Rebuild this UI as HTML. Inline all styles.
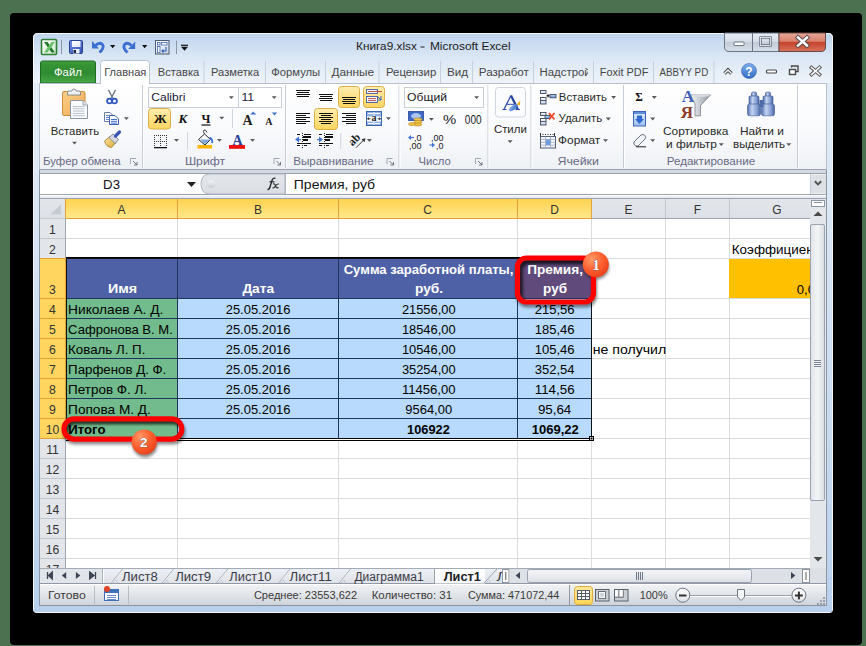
<!DOCTYPE html><html><head><meta charset="utf-8"><style>html,body{margin:0;padding:0;width:866px;height:646px;overflow:hidden;background:#4b7151;font-family:"Liberation Sans",sans-serif}svg{display:block}</style></head><body><svg width="866" height="646" viewBox="0 0 866 646" font-family="Liberation Sans, sans-serif"><defs><linearGradient id="gFrame" x1="0" y1="0" x2="0" y2="1"><stop offset="0" stop-color="#cfdff2"/><stop offset="0.05" stop-color="#d2e1f3"/><stop offset="0.09" stop-color="#e9f0f8"/><stop offset="1" stop-color="#bcd3ec"/></linearGradient><linearGradient id="gTitle" x1="0" y1="0" x2="0" y2="1"><stop offset="0" stop-color="#c0d5ee"/><stop offset="0.45" stop-color="#d9e6f4"/><stop offset="1" stop-color="#eff4fa"/></linearGradient><linearGradient id="gSide" x1="0" y1="0" x2="0" y2="1"><stop offset="0" stop-color="#e4edf7"/><stop offset="1" stop-color="#b9d1ec"/></linearGradient><linearGradient id="gXl" x1="0" y1="0" x2="1" y2="1"><stop offset="0" stop-color="#ffffff"/><stop offset="1" stop-color="#cfe8cf"/></linearGradient><linearGradient id="gSave" x1="0" y1="0" x2="1" y2="1"><stop offset="0" stop-color="#6f8fe0"/><stop offset="1" stop-color="#3350b0"/></linearGradient><linearGradient id="gLbl" x1="0" y1="0" x2="1" y2="1"><stop offset="0" stop-color="#ffffff"/><stop offset="1" stop-color="#dfe6f2"/></linearGradient><linearGradient id="gForm" x1="0" y1="0" x2="1" y2="1"><stop offset="0" stop-color="#ffffff"/><stop offset="1" stop-color="#c9d3e3"/></linearGradient><linearGradient id="gBtn" x1="0" y1="0" x2="0" y2="1"><stop offset="0" stop-color="#e9eef5"/><stop offset="0.45" stop-color="#d7dee8"/><stop offset="0.5" stop-color="#c3ccd8"/><stop offset="1" stop-color="#d5dde8"/></linearGradient><linearGradient id="gClose" x1="0" y1="0" x2="0" y2="1"><stop offset="0" stop-color="#e8a799"/><stop offset="0.45" stop-color="#d9826f"/><stop offset="0.5" stop-color="#c7432b"/><stop offset="1" stop-color="#d6735e"/></linearGradient><linearGradient id="gFile" x1="0" y1="0" x2="0" y2="1"><stop offset="0" stop-color="#45a040"/><stop offset="0.15" stop-color="#369434"/><stop offset="0.55" stop-color="#2e8a30"/><stop offset="1" stop-color="#4aa846"/></linearGradient><linearGradient id="gHelp" x1="0" y1="0" x2="0" y2="1"><stop offset="0" stop-color="#7fb0ec"/><stop offset="1" stop-color="#2f6cc4"/></linearGradient><linearGradient id="gRib" x1="0" y1="0" x2="0" y2="1"><stop offset="0" stop-color="#ffffff"/><stop offset="0.55" stop-color="#f9fafc"/><stop offset="1" stop-color="#eef1f5"/></linearGradient><linearGradient id="gClip" x1="0" y1="0" x2="1" y2="1"><stop offset="0" stop-color="#fbd08a"/><stop offset="1" stop-color="#efa94f"/></linearGradient><linearGradient id="gBrush" x1="0" y1="0" x2="1" y2="1"><stop offset="0" stop-color="#fbe7a2"/><stop offset="1" stop-color="#d9a836"/></linearGradient><linearGradient id="gHi" x1="0" y1="0" x2="0" y2="1"><stop offset="0" stop-color="#ffeeb0"/><stop offset="1" stop-color="#ffd560"/></linearGradient><linearGradient id="gSBr" x1="0" y1="0" x2="1" y2="1"><stop offset="0" stop-color="#9cc3f5"/><stop offset="1" stop-color="#2d5cc0"/></linearGradient><linearGradient id="gCell" x1="0" y1="0" x2="0" y2="1"><stop offset="0" stop-color="#ffffff"/><stop offset="1" stop-color="#c7d3e6"/></linearGradient><linearGradient id="gCellB" x1="0" y1="0" x2="0" y2="1"><stop offset="0" stop-color="#c8dcf8"/><stop offset="1" stop-color="#5f8fd8"/></linearGradient><linearGradient id="gFill" x1="0" y1="0" x2="0" y2="1"><stop offset="0" stop-color="#e3eefc"/><stop offset="1" stop-color="#9dbfee"/></linearGradient><linearGradient id="gFun" x1="0" y1="0" x2="1" y2="0"><stop offset="0" stop-color="#f4f5f7"/><stop offset="0.6" stop-color="#b9bec6"/><stop offset="1" stop-color="#8e949c"/></linearGradient><linearGradient id="gBino" x1="0" y1="0" x2="1" y2="0"><stop offset="0" stop-color="#4f6fae"/><stop offset="0.35" stop-color="#c3d4f2"/><stop offset="0.7" stop-color="#8aa4d6"/><stop offset="1" stop-color="#4a66a3"/></linearGradient><linearGradient id="gPill" x1="0" y1="0" x2="0" y2="1"><stop offset="0" stop-color="#e4e7eb"/><stop offset="1" stop-color="#dadee4"/></linearGradient><linearGradient id="gDot" x1="0" y1="0" x2="0" y2="1"><stop offset="0" stop-color="#f4f5f7"/><stop offset="1" stop-color="#c8ccd2"/></linearGradient><linearGradient id="gHdr" x1="0" y1="0" x2="0" y2="1"><stop offset="0" stop-color="#e2e6eb"/><stop offset="1" stop-color="#dde1e7"/></linearGradient><linearGradient id="gHdrSel" x1="0" y1="0" x2="0" y2="1"><stop offset="0" stop-color="#ffd24f"/><stop offset="1" stop-color="#ffe88a"/></linearGradient><filter id="fSh" x="-20%" y="-20%" width="140%" height="160%"><feGaussianBlur stdDeviation="1.8"/></filter><clipPath id="cIn1"><rect x="520" y="260.5" width="71" height="39" rx="6.5"/></clipPath><clipPath id="cIn2"><rect x="66.5" y="421.3" width="112.8" height="15.3" rx="7.5"/></clipPath><radialGradient id="gBadge" cx="0.35" cy="0.3" r="0.75"><stop offset="0" stop-color="#ff9a68"/><stop offset="0.55" stop-color="#ff6030"/><stop offset="1" stop-color="#e8401a"/></radialGradient><linearGradient id="gThumbV" x1="0" y1="0" x2="1" y2="0"><stop offset="0" stop-color="#dfe3e8"/><stop offset="0.5" stop-color="#f3f5f7"/><stop offset="1" stop-color="#d8dde3"/></linearGradient><linearGradient id="gTabBar" x1="0" y1="0" x2="0" y2="1"><stop offset="0" stop-color="#eceff3"/><stop offset="1" stop-color="#dfe3e8"/></linearGradient><linearGradient id="gActTab" x1="0" y1="0" x2="0" y2="1"><stop offset="0" stop-color="#ffffff"/><stop offset="1" stop-color="#f4f6f9"/></linearGradient><linearGradient id="gHThumb" x1="0" y1="0" x2="0" y2="1"><stop offset="0" stop-color="#f3f5f7"/><stop offset="0.5" stop-color="#e9ecf0"/><stop offset="1" stop-color="#dadee4"/></linearGradient><linearGradient id="gStat" x1="0" y1="0" x2="0" y2="1"><stop offset="0" stop-color="#f1f3f6"/><stop offset="0.5" stop-color="#e1e5e9"/><stop offset="1" stop-color="#cdd2d9"/></linearGradient><linearGradient id="gNorm" x1="0" y1="0" x2="0" y2="1"><stop offset="0" stop-color="#ffe9a0"/><stop offset="1" stop-color="#ffd456"/></linearGradient><linearGradient id="gZoomBtn" x1="0" y1="0" x2="0" y2="1"><stop offset="0" stop-color="#ffffff"/><stop offset="1" stop-color="#dfe3e8"/></linearGradient></defs><rect x="0" y="0" width="866" height="646" fill="#4b7151" />
<rect x="10" y="13" width="852" height="632" rx="4" fill="#000"/>
<path d="M33,38 Q33,33 38,33 L828,33 Q833,33 833,38 L833,609 Q833,613 829,613 L37,613 Q33,613 33,609 Z" fill="#c4d8ef"/>
<path d="M34,38 Q34,34 38,34 L828,34 Q832,34 832,38 L832,83 L34,83 Z" fill="url(#gTitle)"/>
<path d="M33.5,609 L33.5,38 Q33.5,33.5 38,33.5 L828,33.5 Q832.5,33.5 832.5,38 L832.5,609 Q832.5,612.5 829,612.5 L37,612.5 Q33.5,612.5 33.5,609 Z" fill="none" stroke="#f4f8fc" stroke-width="1"/>
<rect x="34" y="83" width="5.5" height="524" fill="url(#gSide)" />
<rect x="826.5" y="83" width="5.5" height="524" fill="url(#gSide)" />
<rect x="34" y="606" width="798" height="6" fill="#b8d0ec" />
<path d="M34,606 L34,608 Q34,612 38,612" fill="none"/>
<line x1="39.5" y1="83" x2="39.5" y2="606" stroke="#8c96a2" stroke-width="1" />
<line x1="826.5" y1="83" x2="826.5" y2="606" stroke="#8c96a2" stroke-width="1" />
<rect x="41.5" y="39.5" width="15" height="15" rx="1" fill="url(#gXl)" stroke="#2f7f33" stroke-width="1.6"/>
<path d="M44,42 L47.5,42 L55,52.5 L51.5,52.5 Z" fill="#1f7a2a"/>
<path d="M51.5,42 L55,42 L47.5,52.5 L44,52.5 Z" fill="#6cc26a"/>
<line x1="61.5" y1="40" x2="61.5" y2="54" stroke="#8a96a6" stroke-width="1" />
<rect x="69.5" y="40.5" width="13" height="13" rx="1" fill="url(#gSave)" stroke="#2b3f8a"/>
<rect x="72" y="41" width="8.5" height="6" fill="url(#gLbl)" />
<rect x="73" y="49" width="6.5" height="4.5" fill="#e8ecf4" />
<rect x="73.5" y="50" width="2.5" height="3" fill="#1b2440" />
<path d="M95.5,45.5 Q99,42 102,44 Q104.5,46.5 101.5,50.5 L99.5,52.5" fill="none" stroke="#3b6fd0" stroke-width="2.8"/>
<path d="M92,41 L92,48.5 L99,48.5 Z" fill="#3b6fd0"/>
<path d="M110,45 L115.3,45 L112.65,48.2 Z" fill="#111"/>
<path d="M131.5,45.5 Q128,42 125,44 Q122.5,46.5 125.5,50.5 L127.5,52.5" fill="none" stroke="#3b6fd0" stroke-width="2.8"/>
<path d="M135.2,41.5 L135.2,49 L128.2,49 Z" fill="#3b6fd0"/>
<path d="M142,45 L147.3,45 L144.65,48.2 Z" fill="#111"/>
<rect x="155.5" y="40.5" width="13.5" height="13.5" fill="url(#gForm)" stroke="#4c5a72"/>
<rect x="157.5" y="42.5" width="2.5" height="2.5" fill="#fff" stroke="#4466aa" stroke-width="0.8"/>
<rect x="161.5" y="42.5" width="5.5" height="2.5" fill="#fff" stroke="#4466aa" stroke-width="0.8"/>
<rect x="157.5" y="46.5" width="2.5" height="6" fill="#fff" stroke="#4466aa" stroke-width="0.8"/>
<path d="M166,47 L166,51 L162,51 M163.5,49.5 L162,51 L163.5,52.5" fill="none" stroke="#2d5fb5" stroke-width="1.1"/>
<line x1="176.5" y1="40.5" x2="176.5" y2="54" stroke="#8a96a6" stroke-width="1" />
<rect x="181" y="44.7" width="7" height="1.2" fill="#111" />
<path d="M181,46.8 L188,46.8 L184.5,50.8 Z" fill="#111"/>
<text x="356.0" y="50.1" font-size="11.59" fill="#1a1a1a" textLength="60.9" lengthAdjust="spacingAndGlyphs" >Книга9.xlsx</text>
<rect x="420.5" y="46.5" width="4" height="1" fill="#1a1a1a" />
<text x="429.9" y="50.1" font-size="11.59" fill="#1a1a1a" textLength="80.7" lengthAdjust="spacingAndGlyphs" >Microsoft Excel</text>
<path d="M724.5,33 L724.5,47 Q724.5,51.5 729,51.5 L779,51.5 L779,33 Z" fill="url(#gBtn)" stroke="#6b7585" stroke-width="1"/>
<line x1="752.5" y1="33" x2="752.5" y2="51" stroke="#6b7585" stroke-width="1" />
<path d="M779,33 L779,51.5 L821,51.5 Q825.5,51.5 825.5,47 L825.5,33 Z" fill="url(#gClose)" stroke="#6b4a45" stroke-width="1"/>
<rect x="734" y="42" width="10" height="3.5" rx="0.5" fill="#fff" stroke="#4a5568" stroke-width="0.8"/>
<rect x="760.5" y="37.5" width="10" height="8" fill="none" stroke="#4a5568" stroke-width="2.2"/>
<rect x="760.5" y="37.5" width="10" height="8" fill="none" stroke="#fff" stroke-width="0.8"/>
<path d="M798,37.5 L807,45.5 M807,37.5 L798,45.5" stroke="#5a4a4a" stroke-width="4.4" stroke-linecap="square"/>
<path d="M798,37.5 L807,45.5 M807,37.5 L798,45.5" stroke="#fff" stroke-width="2.4" stroke-linecap="square"/>
<path d="M40.5,83 L40.5,63 Q40.5,61 42.5,61 L93.5,61 Q95.5,61 95.5,63 L95.5,83 Z" fill="url(#gFile)" stroke="#1f6b25"/>
<text x="53.9" y="75.8" font-size="10.61" fill="#ffffff" textLength="28.0" lengthAdjust="spacingAndGlyphs" >Файл</text>
<path d="M100.5,83.5 L100.5,63.5 Q100.5,60.5 103.5,60.5 L146.5,60.5 Q149.5,60.5 149.5,63.5 L149.5,83.5" fill="#ffffff" stroke="#b9c3cf"/>
<clipPath id="cTabs"><rect x="40" y="58" width="548" height="25"/><rect x="594" y="58" width="140" height="25"/></clipPath><g clip-path="url(#cTabs)">
<text x="104.2" y="75.8" font-size="10.61" fill="#474747" textLength="42.2" lengthAdjust="spacingAndGlyphs" >Главная</text>
<text x="157.8" y="75.8" font-size="10.61" fill="#474747" textLength="41.4" lengthAdjust="spacingAndGlyphs" >Вставка</text>
<text x="211.0" y="75.8" font-size="10.61" fill="#474747" textLength="48.2" lengthAdjust="spacingAndGlyphs" >Разметка</text>
<text x="271.3" y="75.8" font-size="10.61" fill="#474747" textLength="48.9" lengthAdjust="spacingAndGlyphs" >Формулы</text>
<text x="331.5" y="75.8" font-size="10.61" fill="#474747" textLength="42.7" lengthAdjust="spacingAndGlyphs" >Данные</text>
<text x="386.0" y="75.8" font-size="10.61" fill="#474747" textLength="50.2" lengthAdjust="spacingAndGlyphs" >Рецензир</text>
<text x="446.9" y="75.8" font-size="10.61" fill="#474747" textLength="21.1" lengthAdjust="spacingAndGlyphs" >Вид</text>
<text x="478.8" y="75.8" font-size="10.61" fill="#474747" textLength="50.1" lengthAdjust="spacingAndGlyphs" >Разработ</text>
<text x="539.5" y="75.8" font-size="10.61" fill="#474747" textLength="51.2" lengthAdjust="spacingAndGlyphs" >Надстрой</text>
<text x="599.7" y="75.8" font-size="10.61" fill="#474747" textLength="48.7" lengthAdjust="spacingAndGlyphs" >Foxit PDF</text>
<text x="659.5" y="75.8" font-size="10.61" fill="#474747" textLength="48.7" lengthAdjust="spacingAndGlyphs" >ABBYY PD</text>
</g>
<line x1="204" y1="61" x2="204" y2="83" stroke="#c5d0dc" stroke-width="1" />
<line x1="265.5" y1="61" x2="265.5" y2="83" stroke="#c5d0dc" stroke-width="1" />
<line x1="325.5" y1="61" x2="325.5" y2="83" stroke="#c5d0dc" stroke-width="1" />
<line x1="379" y1="61" x2="379" y2="83" stroke="#c5d0dc" stroke-width="1" />
<line x1="440.5" y1="61" x2="440.5" y2="83" stroke="#c5d0dc" stroke-width="1" />
<line x1="472.5" y1="61" x2="472.5" y2="83" stroke="#c5d0dc" stroke-width="1" />
<line x1="533.5" y1="61" x2="533.5" y2="83" stroke="#c5d0dc" stroke-width="1" />
<line x1="593.5" y1="61" x2="593.5" y2="83" stroke="#c5d0dc" stroke-width="1" />
<line x1="653.5" y1="61" x2="653.5" y2="83" stroke="#c5d0dc" stroke-width="1" />
<line x1="714" y1="61" x2="714" y2="83" stroke="#c5d0dc" stroke-width="1" />
<path d="M724.5,73.5 L728,70 L731.5,73.5" fill="none" stroke="#444" stroke-width="3.4"/>
<path d="M724.5,73.5 L728,70 L731.5,73.5" fill="none" stroke="#fff" stroke-width="1.4"/>
<circle cx="749" cy="71" r="7.5" fill="url(#gHelp)" stroke="#3565b0" stroke-width="0.6"/>
<text x="749" y="75.5" font-size="12" font-weight="bold" fill="#fff" text-anchor="middle">?</text>
<rect x="766.5" y="70" width="10" height="3" rx="1" fill="#fff" stroke="#4a4a4a" stroke-width="1.2"/>
<rect x="789.5" y="69.5" width="6" height="5" fill="#fff" stroke="#4a4a4a" stroke-width="1.4"/>
<path d="M791.5,67.5 L791.5,66 L798,66 L798,71.5 L796,71.5" fill="none" stroke="#4a4a4a" stroke-width="1.4"/>
<path d="M811.5,67.5 L819.5,74.5 M819.5,67.5 L811.5,74.5" stroke="#555" stroke-width="3.6" stroke-linecap="square"/>
<path d="M811.5,67.5 L819.5,74.5 M819.5,67.5 L811.5,74.5" stroke="#fff" stroke-width="1.6" stroke-linecap="square"/>
<rect x="39.5" y="83.5" width="787" height="86" fill="url(#gRib)" stroke="#b6bfcb"/>
<rect x="101" y="82.5" width="48" height="2" fill="#ffffff" />
<line x1="142.5" y1="85" x2="142.5" y2="168" stroke="#c5ccd5" stroke-width="1" />
<line x1="143.5" y1="85" x2="143.5" y2="168" stroke="#ffffff" stroke-width="1" />
<line x1="285.5" y1="85" x2="285.5" y2="168" stroke="#c5ccd5" stroke-width="1" />
<line x1="286.5" y1="85" x2="286.5" y2="168" stroke="#ffffff" stroke-width="1" />
<line x1="399.0" y1="85" x2="399.0" y2="168" stroke="#c5ccd5" stroke-width="1" />
<line x1="400.0" y1="85" x2="400.0" y2="168" stroke="#ffffff" stroke-width="1" />
<line x1="488.0" y1="85" x2="488.0" y2="168" stroke="#c5ccd5" stroke-width="1" />
<line x1="489.0" y1="85" x2="489.0" y2="168" stroke="#ffffff" stroke-width="1" />
<line x1="531.0" y1="85" x2="531.0" y2="168" stroke="#c5ccd5" stroke-width="1" />
<line x1="532.0" y1="85" x2="532.0" y2="168" stroke="#ffffff" stroke-width="1" />
<line x1="623.5" y1="85" x2="623.5" y2="168" stroke="#c5ccd5" stroke-width="1" />
<line x1="624.5" y1="85" x2="624.5" y2="168" stroke="#ffffff" stroke-width="1" />
<line x1="797.5" y1="85" x2="797.5" y2="168" stroke="#c5ccd5" stroke-width="1" />
<line x1="798.5" y1="85" x2="798.5" y2="168" stroke="#ffffff" stroke-width="1" />
<rect x="40" y="169" width="786" height="1" fill="#9ea8b5" />
<text x="43.0" y="164.8" font-size="10.61" fill="#676a85" textLength="77.6" lengthAdjust="spacingAndGlyphs" >Буфер обмена</text>
<text x="184.9" y="164.6" font-size="10.61" fill="#676a85" textLength="40.3" lengthAdjust="spacingAndGlyphs" >Шрифт</text>
<text x="293.2" y="164.6" font-size="10.61" fill="#676a85" textLength="80.4" lengthAdjust="spacingAndGlyphs" >Выравнивание</text>
<text x="418.4" y="164.6" font-size="10.61" fill="#676a85" textLength="32.4" lengthAdjust="spacingAndGlyphs" >Число</text>
<text x="557.5" y="164.6" font-size="10.61" fill="#676a85" textLength="41.4" lengthAdjust="spacingAndGlyphs" >Ячейки</text>
<text x="666.7" y="164.6" font-size="10.61" fill="#676a85" textLength="88.5" lengthAdjust="spacingAndGlyphs" >Редактирование</text>
<path d="M130.5,164 L130.5,158.5 L136,158.5" fill="none" stroke="#a0a8b4"/>
<path d="M133,161 L137,165 M137,162 L137,165 L134,165" fill="none" stroke="#6e7786" stroke-width="1"/>
<path d="M274.0,164 L274.0,158.5 L279.5,158.5" fill="none" stroke="#a0a8b4"/>
<path d="M276.5,161 L280.5,165 M280.5,162 L280.5,165 L277.5,165" fill="none" stroke="#6e7786" stroke-width="1"/>
<path d="M387.0,164 L387.0,158.5 L392.5,158.5" fill="none" stroke="#a0a8b4"/>
<path d="M389.5,161 L393.5,165 M393.5,162 L393.5,165 L390.5,165" fill="none" stroke="#6e7786" stroke-width="1"/>
<path d="M475.5,164 L475.5,158.5 L481,158.5" fill="none" stroke="#a0a8b4"/>
<path d="M478,161 L482,165 M482,162 L482,165 L479,165" fill="none" stroke="#6e7786" stroke-width="1"/>
<text x="50.7" y="135.0" font-size="10.75" fill="#2a2a2a" textLength="48.4" lengthAdjust="spacingAndGlyphs" >Вставить</text>
<path d="M72.0,141.7 L77.0,141.7 L74.5,144.5 Z" fill="#5a5a5a"/>
<rect x="148.5" y="87.5" width="90" height="20" fill="#fff" stroke="#c7ced8"/>
<rect x="238.5" y="87.5" width="43" height="20" fill="#fff" stroke="#c7ced8"/>
<text x="151.3" y="100.7" font-size="11.17" fill="#1a1a3a" textLength="34.1" lengthAdjust="spacingAndGlyphs" >Calibri</text>
<text x="241.4" y="100.7" font-size="11.17" fill="#1a1a3a" textLength="12.7" lengthAdjust="spacingAndGlyphs" >11</text>
<path d="M228.8,96.2 L233.8,96.2 L231.3,99.0 Z" fill="#5a5a5a"/>
<path d="M271.7,96.2 L276.7,96.2 L274.2,99.0 Z" fill="#5a5a5a"/>
<rect x="404.5" y="87.5" width="79" height="20" fill="#fff" stroke="#c7ced8"/>
<text x="407.1" y="100.6" font-size="11.17" fill="#1a1a1a" textLength="40.0" lengthAdjust="spacingAndGlyphs" >Общий</text>
<path d="M474.1,96.2 L479.1,96.2 L476.6,99.0 Z" fill="#5a5a5a"/>
<text x="443.0" y="124.0" font-size="11.87" fill="#222" textLength="13.2" lengthAdjust="spacingAndGlyphs" >%</text>
<text x="464.8" y="124.0" font-size="11.87" fill="#222" textLength="16.8" lengthAdjust="spacingAndGlyphs" >000</text>
<rect x="495.5" y="87.5" width="30" height="29.5" rx="3" fill="#fbfcfd" stroke="#cfd5dd"/>
<text x="493.9" y="133.0" font-size="10.75" fill="#2a2a2a" textLength="32.9" lengthAdjust="spacingAndGlyphs" >Стили</text>
<path d="M507.6,140.2 L512.6,140.2 L510.1,143.0 Z" fill="#5a5a5a"/>
<text x="558.8" y="101.0" font-size="10.75" fill="#2a2a2a" textLength="48.2" lengthAdjust="spacingAndGlyphs" >Вставить</text>
<path d="M611.1,96.10000000000001 L616.1,96.10000000000001 L613.6,98.9 Z" fill="#5a5a5a"/>
<text x="558.5" y="122.4" font-size="10.75" fill="#2a2a2a" textLength="43.7" lengthAdjust="spacingAndGlyphs" >Удалить</text>
<path d="M605.8,117.60000000000001 L610.8,117.60000000000001 L608.3,120.4 Z" fill="#5a5a5a"/>
<text x="558.1" y="144.2" font-size="10.75" fill="#2a2a2a" textLength="42.1" lengthAdjust="spacingAndGlyphs" >Формат</text>
<path d="M603.0,139.2 L608.0,139.2 L605.5,142.0 Z" fill="#5a5a5a"/>
<path d="M651.8,96.10000000000001 L656.8,96.10000000000001 L654.3,98.9 Z" fill="#5a5a5a"/>
<path d="M650.2,117.60000000000001 L655.2,117.60000000000001 L652.7,120.4 Z" fill="#5a5a5a"/>
<path d="M650.2,139.2 L655.2,139.2 L652.7,142.0 Z" fill="#5a5a5a"/>
<text x="662.9" y="135.4" font-size="10.75" fill="#2a2a2a" textLength="65.5" lengthAdjust="spacingAndGlyphs" >Сортировка</text>
<text x="665.9" y="147.8" font-size="10.75" fill="#2a2a2a" textLength="50.9" lengthAdjust="spacingAndGlyphs" >и фильтр</text>
<path d="M718.8,143.2 L723.8,143.2 L721.3,146.0 Z" fill="#5a5a5a"/>
<text x="739.9" y="135.4" font-size="10.75" fill="#2a2a2a" textLength="43.9" lengthAdjust="spacingAndGlyphs" >Найти и</text>
<text x="733.0" y="147.8" font-size="10.75" fill="#2a2a2a" textLength="52.1" lengthAdjust="spacingAndGlyphs" >выделить</text>
<path d="M786.3,143.2 L791.3,143.2 L788.8,146.0 Z" fill="#5a5a5a"/>
<rect x="62.5" y="91.5" width="22.5" height="24" rx="1.5" fill="url(#gClip)" stroke="#c98c3e"/>
<path d="M67.5,95 L67.5,92.5 Q67.5,91 69,91 L72,91 Q72,89 74,89 Q76,89 76,91 L79,91 Q80.5,91 80.5,92.5 L80.5,95 Z" fill="#eef0f3" stroke="#7a8290" stroke-width="0.9"/>
<path d="M70.5,100.5 L83,100.5 L87.5,105 L87.5,118.5 L70.5,118.5 Z" fill="#fbfcfe" stroke="#8c96a5"/>
<path d="M83,100.5 L83,105 L87.5,105" fill="#dfe4ea" stroke="#8c96a5" stroke-width="0.8"/>
<line x1="73" y1="106.5" x2="84.5" y2="106.5" stroke="#b8c1cd" stroke-width="1" />
<line x1="73" y1="108.8" x2="84.5" y2="108.8" stroke="#b8c1cd" stroke-width="1" />
<line x1="73" y1="111.1" x2="84.5" y2="111.1" stroke="#b8c1cd" stroke-width="1" />
<line x1="73" y1="113.4" x2="84.5" y2="113.4" stroke="#b8c1cd" stroke-width="1" />
<line x1="73" y1="115.7" x2="84.5" y2="115.7" stroke="#b8c1cd" stroke-width="1" />
<path d="M108.5,90 L113,98.5 M115.5,90 L111,98.5" stroke="#777f8a" stroke-width="1.6"/>
<circle cx="109.5" cy="101" r="2.4" fill="none" stroke="#2f55c0" stroke-width="1.8"/>
<circle cx="114.5" cy="101" r="2.4" fill="none" stroke="#2f55c0" stroke-width="1.8"/>
<path d="M104.5,112.5 L110,112.5 L112.5,115 L112.5,121.5 L104.5,121.5 Z" fill="#fff" stroke="#6c7fa6"/>
<path d="M109.5,115.5 L115,115.5 L118.5,119 L118.5,124.5 L109.5,124.5 Z" fill="#fff" stroke="#3b5fae"/>
<line x1="106" y1="115.5" x2="110" y2="115.5" stroke="#5b86d6" stroke-width="1" />
<line x1="111" y1="119.5" x2="117" y2="119.5" stroke="#3d6fcf" stroke-width="1" />
<line x1="106" y1="117.5" x2="110" y2="117.5" stroke="#5b86d6" stroke-width="1" />
<line x1="111" y1="121.3" x2="117" y2="121.3" stroke="#3d6fcf" stroke-width="1" />
<line x1="106" y1="119.5" x2="110" y2="119.5" stroke="#5b86d6" stroke-width="1" />
<line x1="111" y1="123.1" x2="117" y2="123.1" stroke="#3d6fcf" stroke-width="1" />
<path d="M123.9,117.2 L128.9,117.2 L126.4,120.0 Z" fill="#5a5a5a"/>
<path d="M104.5,141 L110,136.5 L116,142.5 L111.5,147.5 Q106,147 104.5,141 Z" fill="url(#gBrush)" stroke="#9c7a2a" stroke-width="0.8"/>
<path d="M109,137.5 L113,134 L118.5,139.5 L115,143.5 Z" fill="#d4d8de" stroke="#6d7582" stroke-width="0.8"/>
<path d="M115.5,136 L119.5,132" stroke="#3c56b5" stroke-width="3.2" stroke-linecap="round"/>
<rect x="148.5" y="108.5" width="22" height="20.5" rx="3" fill="url(#gHi)" stroke="#dcae48"/>
<text x="160.3" y="123" font-family="Liberation Serif" font-weight="bold" font-size="13" fill="#111" text-anchor="middle">Ж</text>
<text x="183" y="123" font-family="Liberation Serif" font-weight="bold" font-style="italic" font-size="13" fill="#111" text-anchor="middle">К</text>
<text x="206" y="123" font-family="Liberation Serif" font-weight="bold" font-size="12" fill="#111" text-anchor="middle">Ч</text>
<line x1="201.5" y1="125" x2="210.5" y2="125" stroke="#111" stroke-width="1.2" />
<path d="M219.3,116.8 L224.3,116.8 L221.8,119.6 Z" fill="#5a5a5a"/>
<line x1="232.5" y1="109" x2="232.5" y2="128" stroke="#d0d6de" stroke-width="1" />
<text x="247.5" y="125" font-family="Liberation Serif" font-weight="bold" font-size="14" fill="#222" text-anchor="middle">A</text>
<path d="M250,114.5 L253.2,111.5 L256.4,114.5 Z" fill="#3f74cf"/>
<text x="268.8" y="125" font-family="Liberation Serif" font-weight="bold" font-size="10" fill="#222" text-anchor="middle">A</text>
<path d="M271.8,112.5 L277.2,112.5 L274.5,115.5 Z" fill="#3f74cf"/>
<rect x="154" y="135" width="1" height="1" fill="#333" />
<rect x="156" y="135" width="1" height="1" fill="#333" />
<rect x="158" y="135" width="1" height="1" fill="#333" />
<rect x="160" y="135" width="1" height="1" fill="#333" />
<rect x="162" y="135" width="1" height="1" fill="#333" />
<rect x="164" y="135" width="1" height="1" fill="#333" />
<rect x="166" y="135" width="1" height="1" fill="#333" />
<rect x="154" y="141" width="1" height="1" fill="#333" />
<rect x="156" y="141" width="1" height="1" fill="#333" />
<rect x="158" y="141" width="1" height="1" fill="#333" />
<rect x="160" y="141" width="1" height="1" fill="#333" />
<rect x="162" y="141" width="1" height="1" fill="#333" />
<rect x="164" y="141" width="1" height="1" fill="#333" />
<rect x="166" y="141" width="1" height="1" fill="#333" />
<rect x="154" y="135" width="1" height="1" fill="#333" />
<rect x="154" y="137" width="1" height="1" fill="#333" />
<rect x="154" y="139" width="1" height="1" fill="#333" />
<rect x="154" y="141" width="1" height="1" fill="#333" />
<rect x="154" y="143" width="1" height="1" fill="#333" />
<rect x="154" y="145" width="1" height="1" fill="#333" />
<rect x="160" y="135" width="1" height="1" fill="#333" />
<rect x="160" y="137" width="1" height="1" fill="#333" />
<rect x="160" y="139" width="1" height="1" fill="#333" />
<rect x="160" y="141" width="1" height="1" fill="#333" />
<rect x="160" y="143" width="1" height="1" fill="#333" />
<rect x="160" y="145" width="1" height="1" fill="#333" />
<rect x="166" y="135" width="1" height="1" fill="#333" />
<rect x="166" y="137" width="1" height="1" fill="#333" />
<rect x="166" y="139" width="1" height="1" fill="#333" />
<rect x="166" y="141" width="1" height="1" fill="#333" />
<rect x="166" y="143" width="1" height="1" fill="#333" />
<rect x="166" y="145" width="1" height="1" fill="#333" />
<rect x="154" y="147" width="13" height="1.3" fill="#111" />
<path d="M174.0,139.0 L179.0,139.0 L176.5,141.8 Z" fill="#5a5a5a"/>
<line x1="187.5" y1="132" x2="187.5" y2="150" stroke="#d0d6de" stroke-width="1" />
<path d="M198.5,139.5 L204.5,134 L210.5,139.5 L205,145 Z" fill="#fbfcfe" stroke="#2b2b2b" stroke-width="1"/>
<path d="M200,139.5 L210,139.5 L205,144 Z" fill="#7ea7e0"/>
<path d="M204.5,134 Q202.5,131 204,130 Q206,129.5 207,132.5" fill="none" stroke="#2b2b2b" stroke-width="0.9"/>
<path d="M209.5,137.5 Q213,139 212,143" fill="none" stroke="#3d73c9" stroke-width="1.8"/>
<rect x="197.5" y="145" width="14.5" height="3.5" fill="#ffb400" />
<path d="M216.9,139.0 L221.9,139.0 L219.4,141.8 Z" fill="#5a5a5a"/>
<text x="237.5" y="144.5" font-family="Liberation Serif" font-weight="bold" font-size="14" fill="#2a3f9c" text-anchor="middle">A</text>
<rect x="229" y="145" width="16" height="3.8" fill="#ee1111" />
<path d="M250.0,139.0 L255.0,139.0 L252.5,141.8 Z" fill="#5a5a5a"/>
<rect x="296" y="90" width="14" height="1" fill="#111" />
<rect x="297" y="92" width="12" height="1" fill="#111" />
<rect x="296" y="94" width="14" height="1" fill="#111" />
<rect x="297" y="96" width="12" height="1" fill="#111" />
<rect x="319" y="94" width="14" height="1" fill="#111" />
<rect x="320" y="96" width="12" height="1" fill="#111" />
<rect x="319" y="98" width="14" height="1" fill="#111" />
<rect x="320" y="100" width="12" height="1" fill="#111" />
<rect x="338.5" y="86.5" width="21" height="21" rx="3" fill="url(#gHi)" stroke="#dcae48"/>
<rect x="342" y="97" width="14" height="1" fill="#111" />
<rect x="343" y="99" width="12" height="1" fill="#111" />
<rect x="342" y="101" width="14" height="1" fill="#111" />
<rect x="343" y="103" width="12" height="1" fill="#111" />
<rect x="363.5" y="86.5" width="21" height="21" rx="3" fill="url(#gHi)" stroke="#dcae48"/>
<rect x="366.5" y="89.5" width="11" height="4" fill="#f6f8fc" stroke="#3d5a9c" stroke-width="0.9"/>
<rect x="366.5" y="96.5" width="11" height="6" fill="#f6f8fc" stroke="#3d5a9c" stroke-width="0.9"/>
<line x1="368" y1="91.5" x2="382" y2="91.5" stroke="#b0403a" stroke-width="0.9" />
<line x1="368" y1="98.6" x2="376" y2="98.6" stroke="#b0403a" stroke-width="0.9" />
<line x1="368" y1="100.6" x2="376" y2="100.6" stroke="#b0403a" stroke-width="0.9" />
<path d="M381,96 L381,100 L378.5,100 M381,100 L378,97" fill="none" stroke="#2f62c8" stroke-width="1"/>
<rect x="296" y="113" width="14" height="1" fill="#111" />
<rect x="296" y="115" width="10" height="1" fill="#111" />
<rect x="296" y="117" width="14" height="1" fill="#111" />
<rect x="296" y="119" width="10" height="1" fill="#111" />
<rect x="296" y="121" width="14" height="1" fill="#111" />
<rect x="296" y="123" width="10" height="1" fill="#111" />
<rect x="314.5" y="108.5" width="23" height="21" rx="3" fill="url(#gHi)" stroke="#dcae48"/>
<rect x="319" y="113" width="14" height="1" fill="#111" />
<rect x="321" y="115" width="10" height="1" fill="#111" />
<rect x="319" y="117" width="14" height="1" fill="#111" />
<rect x="321" y="119" width="10" height="1" fill="#111" />
<rect x="319" y="121" width="14" height="1" fill="#111" />
<rect x="321" y="123" width="10" height="1" fill="#111" />
<rect x="342" y="113" width="14" height="1" fill="#111" />
<rect x="346" y="115" width="10" height="1" fill="#111" />
<rect x="342" y="117" width="14" height="1" fill="#111" />
<rect x="346" y="119" width="10" height="1" fill="#111" />
<rect x="342" y="121" width="14" height="1" fill="#111" />
<rect x="346" y="123" width="10" height="1" fill="#111" />
<rect x="366.5" y="111.5" width="15" height="14" fill="#fff" stroke="#3c64b0"/>
<rect x="367" y="112" width="14" height="4.5" fill="#8fb1e6" />
<rect x="367" y="121.5" width="14" height="3.5" fill="#8fb1e6" />
<line x1="374" y1="112" x2="374" y2="116.5" stroke="#fff" stroke-width="1" />
<line x1="374" y1="121.5" x2="374" y2="125" stroke="#fff" stroke-width="1" />
<rect x="368" y="113" width="5" height="1" fill="#ffffff" />
<rect x="375" y="113" width="5" height="1" fill="#ffffff" />
<rect x="368" y="123" width="5" height="1" fill="#ffffff" />
<rect x="375" y="123" width="5" height="1" fill="#ffffff" />
<text x="374" y="121" font-family="Liberation Serif" font-weight="bold" font-size="10" fill="#222" text-anchor="middle">a</text>
<line x1="367.5" y1="118.8" x2="370.5" y2="118.8" stroke="#333" stroke-width="0.9" />
<line x1="377.5" y1="118.8" x2="380.5" y2="118.8" stroke="#333" stroke-width="0.9" />
<path d="M367,118.8 L369,117.3 L369,120.3 Z M381,118.8 L379,117.3 L379,120.3 Z" fill="#333"/>
<path d="M385.9,117.3 L390.9,117.3 L388.4,120.1 Z" fill="#5a5a5a"/>
<rect x="297" y="134" width="3" height="1" fill="#111" />
<rect x="304" y="134" width="7" height="1" fill="#111" />
<rect x="303" y="136" width="8" height="2" fill="#111" />
<rect x="303" y="139" width="5" height="2" fill="#111" />
<rect x="297" y="143" width="14" height="1" fill="#111" />
<rect x="297" y="145" width="3" height="1" fill="#111" />
<rect x="304" y="145" width="3" height="1" fill="#111" />
<rect x="302" y="133" width="1" height="1" fill="#222" />
<rect x="302" y="135" width="1" height="1" fill="#222" />
<rect x="302" y="137" width="1" height="1" fill="#222" />
<rect x="302" y="139" width="1" height="1" fill="#222" />
<rect x="302" y="141" width="1" height="1" fill="#222" />
<rect x="302" y="143" width="1" height="1" fill="#222" />
<rect x="302" y="145" width="1" height="1" fill="#222" />
<rect x="302" y="147" width="1" height="1" fill="#222" />
<path d="M295,139.5 L299,136.5 L299,142.5 Z" fill="#3f74cf"/>
<rect x="298" y="139" width="3" height="1.2" fill="#3f74cf" />
<rect x="319" y="134" width="3" height="1" fill="#111" />
<rect x="326" y="134" width="7" height="1" fill="#111" />
<rect x="325" y="136" width="8" height="2" fill="#111" />
<rect x="325" y="139" width="5" height="2" fill="#111" />
<rect x="319" y="143" width="14" height="1" fill="#111" />
<rect x="319" y="145" width="3" height="1" fill="#111" />
<rect x="326" y="145" width="3" height="1" fill="#111" />
<rect x="324" y="133" width="1" height="1" fill="#222" />
<rect x="324" y="135" width="1" height="1" fill="#222" />
<rect x="324" y="137" width="1" height="1" fill="#222" />
<rect x="324" y="139" width="1" height="1" fill="#222" />
<rect x="324" y="141" width="1" height="1" fill="#222" />
<rect x="324" y="143" width="1" height="1" fill="#222" />
<rect x="324" y="145" width="1" height="1" fill="#222" />
<rect x="324" y="147" width="1" height="1" fill="#222" />
<path d="M323,139.5 L319,136.5 L319,142.5 Z" fill="#3f74cf"/>
<rect x="317" y="139" width="3" height="1.2" fill="#3f74cf" />
<line x1="340.7" y1="133" x2="340.7" y2="149" stroke="#d0d6de" stroke-width="1" />
<text x="0" y="0" font-family="Liberation Serif" font-weight="bold" font-size="11.5" fill="#1a1a1a" transform="translate(352.5,146.5) rotate(-45)">ab</text>
<line x1="356" y1="147.7" x2="364.5" y2="139.2" stroke="#333" stroke-width="1" />
<path d="M365.5,138.2 L361.5,139.2 L364.5,142.2 Z" fill="#333"/>
<path d="M366.9,139.1 L371.9,139.1 L369.4,141.9 Z" fill="#5a5a5a"/>
<rect x="408.5" y="111.5" width="15" height="9" fill="#3d67c4" stroke="#2a4a9a" stroke-width="0.8"/>
<ellipse cx="416" cy="116" rx="5" ry="3" fill="#a9c4ef"/>
<ellipse cx="418" cy="119.5" rx="4" ry="1.5" fill="#f1c24a" stroke="#b88a1e" stroke-width="0.6"/>
<ellipse cx="418" cy="122.0" rx="4" ry="1.5" fill="#f1c24a" stroke="#b88a1e" stroke-width="0.6"/>
<ellipse cx="418" cy="124.5" rx="4" ry="1.5" fill="#f1c24a" stroke="#b88a1e" stroke-width="0.6"/>
<ellipse cx="412" cy="124" rx="3.5" ry="1.5" fill="#f1c24a" stroke="#b88a1e" stroke-width="0.6"/>
<path d="M428.9,117.9 L433.9,117.9 L431.4,120.7 Z" fill="#5a5a5a"/>
<text x="414" y="141" font-size="9" fill="#1a1a1a">,0</text>
<text x="409" y="148.5" font-size="9" fill="#1a1a1a">,00</text>
<path d="M408,137.5 L411,135 L411,140 Z" fill="#3f74cf"/>
<line x1="410" y1="137.5" x2="414" y2="137.5" stroke="#3f74cf" stroke-width="1.2" />
<text x="431" y="141" font-size="9" fill="#1a1a1a">,00</text>
<text x="436" y="148.5" font-size="9" fill="#1a1a1a">,0</text>
<path d="M435,145 L432,142.5 L432,147.5 Z" fill="#3f74cf"/>
<line x1="429.5" y1="145" x2="433" y2="145" stroke="#3f74cf" stroke-width="1.2" />
<path d="M511,95.5 L504,109.3" stroke="#2f4fa8" stroke-width="1.3"/>
<path d="M511,95.5 L517.8,109.3" stroke="#2a47a0" stroke-width="2.3"/>
<path d="M502.5,109.5 L506.5,109.5 M515.5,109.5 L520,109.5 M506.5,104.3 L515,104.3" stroke="#2f4fa8" stroke-width="1"/>
<ellipse cx="513.3" cy="107.6" rx="5.2" ry="2.3" transform="rotate(-35 513.3 107.6)" fill="url(#gSBr)"/>
<path d="M516.5,104.5 L520.3,100.5 L519.8,105.5 Z" fill="#f0b020"/>
<rect x="540.5" y="90.5" width="5.5" height="3" fill="url(#gCell)" stroke="#3c4a62" stroke-width="0.9"/>
<rect x="540.5" y="97.5" width="5.5" height="6.5" fill="url(#gCell)" stroke="#3c4a62" stroke-width="0.9"/>
<line x1="540.5" y1="100.5" x2="546" y2="100.5" stroke="#3c4a62" stroke-width="0.9" />
<rect x="550.0" y="94.5" width="6" height="3.3" fill="url(#gCellB)" stroke="#3c4a62" stroke-width="0.9"/>
<line x1="546.5" y1="95.8" x2="549.5" y2="95.8" stroke="#111" stroke-width="1.1" />
<line x1="548" y1="94.3" x2="548" y2="97.3" stroke="#111" stroke-width="1.1" />
<rect x="540.5" y="112.5" width="5.5" height="3" fill="url(#gCell)" stroke="#3c4a62" stroke-width="0.9"/>
<rect x="540.5" y="118.5" width="5.5" height="6.5" fill="url(#gCell)" stroke="#3c4a62" stroke-width="0.9"/>
<line x1="540.5" y1="121.5" x2="546" y2="121.5" stroke="#3c4a62" stroke-width="0.9" />
<rect x="545.0" y="115.5" width="5" height="3" fill="url(#gCellB)" stroke="#3c4a62" stroke-width="0.9"/>
<path d="M549,113 L554.5,119.5 M554.5,113 L549,119.5" stroke="#ee4422" stroke-width="1.8"/>
<rect x="540.5" y="136.5" width="15" height="11.5" fill="#f6f8fb" stroke="#3c4a62" stroke-width="0.9"/>
<line x1="545.5" y1="136.5" x2="545.5" y2="148" stroke="#9aa8bd" stroke-width="0.8" />
<line x1="550.5" y1="136.5" x2="550.5" y2="148" stroke="#9aa8bd" stroke-width="0.8" />
<line x1="540.5" y1="139.4" x2="555.5" y2="139.4" stroke="#9aa8bd" stroke-width="0.8" />
<line x1="540.5" y1="142.3" x2="555.5" y2="142.3" stroke="#9aa8bd" stroke-width="0.8" />
<line x1="540.5" y1="145.2" x2="555.5" y2="145.2" stroke="#9aa8bd" stroke-width="0.8" />
<rect x="546" y="139.5" width="4.5" height="5.5" fill="#6f9be0" />
<line x1="540" y1="134.5" x2="555" y2="134.5" stroke="#222" stroke-width="1" stroke-dasharray="1,1.5"/>
<line x1="540.5" y1="133" x2="540.5" y2="136" stroke="#222" stroke-width="0.9" />
<line x1="554.5" y1="133" x2="554.5" y2="136" stroke="#222" stroke-width="0.9" />
<text x="639" y="101" font-family="Liberation Serif" font-weight="bold" font-size="11.5" fill="#111" text-anchor="middle">Σ</text>
<rect x="633.5" y="111.5" width="12" height="14.5" fill="url(#gFill)" stroke="#3b66b8"/>
<rect x="634" y="112" width="11" height="2" fill="#5f8fdc" />
<path d="M637,115.5 L642,115.5 L642,119 L644,119 L639.5,124 L635,119 L637,119 Z" fill="#2f6ad3"/>
<path d="M634,142 L641,135 Q643,133.5 645,135.5 Q646.5,137.5 645,139 L638,146 L635.5,146 Q633,144 634,142 Z" fill="#f2f4f7" stroke="#5c6674" stroke-width="0.9"/>
<line x1="636" y1="146.8" x2="646" y2="146.8" stroke="#222" stroke-width="1" />
<path d="M690.5,95 L710.5,95 L700.5,105.5 L700.5,115.8 L695,115.8 L695,104 Z" fill="url(#gFun)" stroke="#7b828c" stroke-width="0.8"/>
<ellipse cx="700.5" cy="95.6" rx="9.5" ry="1.2" fill="#d8dce2"/>
<text x="687.8" y="102.4" font-family="Liberation Serif" font-weight="bold" font-size="17" fill="#3a63b8" text-anchor="middle">A</text>
<text x="687" y="117.8" font-family="Liberation Serif" font-weight="bold" font-size="17" fill="#8b3d2c" text-anchor="middle">Я</text>
<rect x="751.5" y="92" width="5" height="4.5" rx="1.5" fill="url(#gBino)" stroke="#3c5592" stroke-width="0.6"/>
<rect x="749.0" y="96" width="10" height="8.5" rx="1.2" fill="url(#gBino)" stroke="#3c5592" stroke-width="0.6"/>
<rect x="747.5" y="104" width="13" height="11.8" rx="2" fill="url(#gBino)" stroke="#3c5592" stroke-width="0.6"/>
<rect x="765.5" y="92" width="5" height="4.5" rx="1.5" fill="url(#gBino)" stroke="#3c5592" stroke-width="0.6"/>
<rect x="763.0" y="96" width="10" height="8.5" rx="1.2" fill="url(#gBino)" stroke="#3c5592" stroke-width="0.6"/>
<rect x="761.5" y="104" width="13" height="11.8" rx="2" fill="url(#gBino)" stroke="#3c5592" stroke-width="0.6"/>
<rect x="759.5" y="100" width="4" height="7" fill="#4e6aa8" />
<rect x="40" y="170" width="786" height="29" fill="#d9dee5" />
<line x1="40" y1="169.5" x2="826" y2="169.5" stroke="#9aa2ad" stroke-width="1" />
<rect x="40" y="170" width="786" height="3" fill="#d3d9e0" />
<line x1="40" y1="173.5" x2="826" y2="173.5" stroke="#9aa2ad" stroke-width="1" />
<rect x="40" y="174" width="786" height="20" fill="#ffffff" />
<line x1="40" y1="194.5" x2="826" y2="194.5" stroke="#9aa2ad" stroke-width="1" />
<rect x="40" y="195" width="786" height="3" fill="#e9edf3" />
<line x1="40" y1="195.5" x2="826" y2="195.5" stroke="#ffffff" stroke-width="1" />
<line x1="40" y1="198.5" x2="826" y2="198.5" stroke="#9aa2ad" stroke-width="1" />
<text x="103.1" y="188.8" font-size="12.01" fill="#111" textLength="16.9" lengthAdjust="spacingAndGlyphs" >D3</text>
<path d="M187,182 L196,182 L191.5,187 Z" fill="#222"/>
<path d="M210,174 L285,174 L285,194 L210,194 Q201,194 201,184 Q201,174 210,174 Z" fill="url(#gPill)" stroke="#aeb5be"/>
<circle cx="211" cy="184" r="3.8" fill="url(#gDot)"/>
<line x1="285.5" y1="174" x2="285.5" y2="194" stroke="#aeb5be" stroke-width="1" />
<path d="M267.5,189.5 Q269.5,189.8 270.3,186 L272.2,179.8 Q273.3,177.6 275.5,178.3" fill="none" stroke="#2a2a2a" stroke-width="1.4"/>
<path d="M269.5,181.8 L274.5,181.8" stroke="#2a2a2a" stroke-width="1.2"/>
<path d="M273,184 Q274.5,183.3 275.2,185 L276.2,187.3 Q277,188.3 278.5,187.5 M278.8,184 Q277,183.8 275.8,185.5 L274.5,187.3 Q273.6,188.2 272.5,187.8" fill="none" stroke="#2a2a2a" stroke-width="1.1"/>
<text x="293.8" y="188.6" font-size="12.01" fill="#111" textLength="81.3" lengthAdjust="spacingAndGlyphs" >Премия, руб</text>
<rect x="810.5" y="174.5" width="15.5" height="19" fill="#dde1e6"/>
<line x1="810.5" y1="174" x2="810.5" y2="194" stroke="#c5ccd4" stroke-width="1" />
<path d="M814.8,181.2 L818,184.4 L821.2,181.2" fill="none" stroke="#555" stroke-width="2"/>
<rect x="40" y="199" width="770" height="369" fill="#ffffff" />
<rect x="40" y="199" width="770" height="19" fill="url(#gHdr)" />
<rect x="40" y="218" width="25" height="350" fill="#e2e6eb" />
<rect x="66" y="199" width="525" height="19" fill="url(#gHdrSel)" />
<rect x="40" y="258" width="25" height="180" fill="#ffd55f" />
<path d="M50,214.5 L61,214.5 L61,204.5 Z" fill="#c6cbd1"/>
<line x1="66" y1="238.5" x2="810" y2="238.5" stroke="#d9dbdd" stroke-width="1" />
<line x1="66" y1="258.5" x2="810" y2="258.5" stroke="#d9dbdd" stroke-width="1" />
<line x1="66" y1="298.5" x2="810" y2="298.5" stroke="#d9dbdd" stroke-width="1" />
<line x1="66" y1="318.5" x2="810" y2="318.5" stroke="#d9dbdd" stroke-width="1" />
<line x1="66" y1="338.5" x2="810" y2="338.5" stroke="#d9dbdd" stroke-width="1" />
<line x1="66" y1="358.5" x2="810" y2="358.5" stroke="#d9dbdd" stroke-width="1" />
<line x1="66" y1="378.5" x2="810" y2="378.5" stroke="#d9dbdd" stroke-width="1" />
<line x1="66" y1="398.5" x2="810" y2="398.5" stroke="#d9dbdd" stroke-width="1" />
<line x1="66" y1="418.5" x2="810" y2="418.5" stroke="#d9dbdd" stroke-width="1" />
<line x1="66" y1="438.5" x2="810" y2="438.5" stroke="#d9dbdd" stroke-width="1" />
<line x1="66" y1="458.5" x2="810" y2="458.5" stroke="#d9dbdd" stroke-width="1" />
<line x1="66" y1="478.5" x2="810" y2="478.5" stroke="#d9dbdd" stroke-width="1" />
<line x1="66" y1="498.5" x2="810" y2="498.5" stroke="#d9dbdd" stroke-width="1" />
<line x1="66" y1="518.5" x2="810" y2="518.5" stroke="#d9dbdd" stroke-width="1" />
<line x1="66" y1="538.5" x2="810" y2="538.5" stroke="#d9dbdd" stroke-width="1" />
<line x1="66" y1="558.5" x2="810" y2="558.5" stroke="#d9dbdd" stroke-width="1" />
<line x1="177.5" y1="219" x2="177.5" y2="568" stroke="#d9dbdd" stroke-width="1" />
<line x1="338.5" y1="219" x2="338.5" y2="568" stroke="#d9dbdd" stroke-width="1" />
<line x1="517.5" y1="219" x2="517.5" y2="568" stroke="#d9dbdd" stroke-width="1" />
<line x1="591.5" y1="219" x2="591.5" y2="568" stroke="#d9dbdd" stroke-width="1" />
<line x1="665.5" y1="219" x2="665.5" y2="568" stroke="#d9dbdd" stroke-width="1" />
<line x1="729.5" y1="219" x2="729.5" y2="568" stroke="#d9dbdd" stroke-width="1" />
<line x1="177.5" y1="199" x2="177.5" y2="218" stroke="#e5a33f" stroke-width="1" />
<line x1="338.5" y1="199" x2="338.5" y2="218" stroke="#e5a33f" stroke-width="1" />
<line x1="517.5" y1="199" x2="517.5" y2="218" stroke="#e5a33f" stroke-width="1" />
<line x1="591.5" y1="199" x2="591.5" y2="218" stroke="#e5a33f" stroke-width="1" />
<line x1="665.5" y1="199" x2="665.5" y2="218" stroke="#c3c8cf" stroke-width="1" />
<line x1="729.5" y1="199" x2="729.5" y2="218" stroke="#c3c8cf" stroke-width="1" />
<line x1="40" y1="218.5" x2="810" y2="218.5" stroke="#9ea6b0" stroke-width="1" />
<line x1="65" y1="218.5" x2="592" y2="218.5" stroke="#e2a035" stroke-width="1" />
<line x1="40" y1="218.5" x2="65" y2="218.5" stroke="#c3c8cf" stroke-width="1" />
<line x1="40" y1="238.5" x2="65" y2="238.5" stroke="#c3c8cf" stroke-width="1" />
<line x1="40" y1="438.5" x2="65" y2="438.5" stroke="#c3c8cf" stroke-width="1" />
<line x1="40" y1="458.5" x2="65" y2="458.5" stroke="#c3c8cf" stroke-width="1" />
<line x1="40" y1="478.5" x2="65" y2="478.5" stroke="#c3c8cf" stroke-width="1" />
<line x1="40" y1="498.5" x2="65" y2="498.5" stroke="#c3c8cf" stroke-width="1" />
<line x1="40" y1="518.5" x2="65" y2="518.5" stroke="#c3c8cf" stroke-width="1" />
<line x1="40" y1="538.5" x2="65" y2="538.5" stroke="#c3c8cf" stroke-width="1" />
<line x1="40" y1="558.5" x2="65" y2="558.5" stroke="#c3c8cf" stroke-width="1" />
<line x1="40" y1="258.5" x2="65" y2="258.5" stroke="#e2a035" stroke-width="1" />
<line x1="40" y1="298.5" x2="65" y2="298.5" stroke="#e2a035" stroke-width="1" />
<line x1="40" y1="318.5" x2="65" y2="318.5" stroke="#e2a035" stroke-width="1" />
<line x1="40" y1="338.5" x2="65" y2="338.5" stroke="#e2a035" stroke-width="1" />
<line x1="40" y1="358.5" x2="65" y2="358.5" stroke="#e2a035" stroke-width="1" />
<line x1="40" y1="378.5" x2="65" y2="378.5" stroke="#e2a035" stroke-width="1" />
<line x1="40" y1="398.5" x2="65" y2="398.5" stroke="#e2a035" stroke-width="1" />
<line x1="40" y1="418.5" x2="65" y2="418.5" stroke="#e2a035" stroke-width="1" />
<line x1="40" y1="438.5" x2="65" y2="438.5" stroke="#e2a035" stroke-width="1" />
<line x1="65.5" y1="199" x2="65.5" y2="568" stroke="#9ea6b0" stroke-width="1" />
<line x1="65.5" y1="199" x2="65.5" y2="218" stroke="#e2a035" stroke-width="1" />
<line x1="65.5" y1="258" x2="65.5" y2="438" stroke="#e2a035" stroke-width="1" />
<rect x="66" y="258" width="451" height="40" fill="#4f61a6" />
<rect x="517" y="258" width="74" height="40" fill="#604a7b" />
<rect x="66" y="298" width="111" height="140" fill="#72bb8c" />
<rect x="177" y="298" width="414" height="140" fill="#b8dafc" />
<rect x="729" y="259" width="81" height="39" fill="#ffc000" />
<line x1="66" y1="298.5" x2="591" y2="298.5" stroke="#1f3559" stroke-width="1" />
<line x1="66" y1="318.5" x2="591" y2="318.5" stroke="#1f3559" stroke-width="1" />
<line x1="66" y1="338.5" x2="591" y2="338.5" stroke="#1f3559" stroke-width="1" />
<line x1="66" y1="358.5" x2="591" y2="358.5" stroke="#1f3559" stroke-width="1" />
<line x1="66" y1="378.5" x2="591" y2="378.5" stroke="#1f3559" stroke-width="1" />
<line x1="66" y1="398.5" x2="591" y2="398.5" stroke="#1f3559" stroke-width="1" />
<line x1="66" y1="418.5" x2="591" y2="418.5" stroke="#1f3559" stroke-width="1" />
<line x1="177.5" y1="258" x2="177.5" y2="438" stroke="#1f3559" stroke-width="1" />
<line x1="338.5" y1="258" x2="338.5" y2="438" stroke="#1f3559" stroke-width="1" />
<line x1="517.5" y1="258" x2="517.5" y2="438" stroke="#1f3559" stroke-width="1" />
<rect x="66.5" y="258.5" width="525" height="180" fill="none" stroke="#111" stroke-width="1"/>
<line x1="66" y1="257.5" x2="592" y2="257.5" stroke="#000" stroke-width="1" />
<line x1="66" y1="438.5" x2="592" y2="438.5" stroke="#000" stroke-width="1" />
<line x1="66" y1="440.5" x2="592" y2="440.5" stroke="#000" stroke-width="1" />
<rect x="589" y="436" width="5" height="5" fill="#000" />
<rect x="590" y="437" width="3" height="3" fill="#fff" />
<rect x="590.5" y="437.5" width="2" height="2" fill="#000" />
<text x="121.5" y="213.8" font-size="12" fill="#333" text-anchor="middle">A</text>
<text x="258" y="213.8" font-size="12" fill="#333" text-anchor="middle">B</text>
<text x="427.5" y="213.8" font-size="12" fill="#333" text-anchor="middle">C</text>
<text x="554.5" y="213.8" font-size="12" fill="#333" text-anchor="middle">D</text>
<text x="628.5" y="213.8" font-size="12" fill="#333" text-anchor="middle">E</text>
<text x="697.5" y="213.8" font-size="12" fill="#333" text-anchor="middle">F</text>
<text x="777" y="213.8" font-size="12" fill="#333" text-anchor="middle">G</text>
<clipPath id="cGrid"><rect x="40" y="199" width="770" height="369"/></clipPath><g clip-path="url(#cGrid)">
<text x="52.5" y="234" font-size="12.2" fill="#333" text-anchor="middle">1</text>
<text x="52.5" y="254" font-size="12.2" fill="#333" text-anchor="middle">2</text>
<text x="52.5" y="294" font-size="12.2" fill="#333" text-anchor="middle">3</text>
<text x="52.5" y="314" font-size="12.2" fill="#333" text-anchor="middle">4</text>
<text x="52.5" y="334" font-size="12.2" fill="#333" text-anchor="middle">5</text>
<text x="52.5" y="354" font-size="12.2" fill="#333" text-anchor="middle">6</text>
<text x="52.5" y="374" font-size="12.2" fill="#333" text-anchor="middle">7</text>
<text x="52.5" y="394" font-size="12.2" fill="#333" text-anchor="middle">8</text>
<text x="52.5" y="414" font-size="12.2" fill="#333" text-anchor="middle">9</text>
<text x="52.5" y="434" font-size="12.2" fill="#333" text-anchor="middle">10</text>
<text x="52.5" y="454" font-size="12.2" fill="#333" text-anchor="middle">11</text>
<text x="52.5" y="474" font-size="12.2" fill="#333" text-anchor="middle">12</text>
<text x="52.5" y="494" font-size="12.2" fill="#333" text-anchor="middle">13</text>
<text x="52.5" y="514" font-size="12.2" fill="#333" text-anchor="middle">14</text>
<text x="52.5" y="534" font-size="12.2" fill="#333" text-anchor="middle">15</text>
<text x="52.5" y="554" font-size="12.2" fill="#333" text-anchor="middle">16</text>
<text x="52.5" y="574" font-size="12.2" fill="#333" text-anchor="middle">17</text>
</g>
<text x="108.0" y="292.7" font-size="12.57" fill="#ffffff" font-weight="bold" textLength="29.2" lengthAdjust="spacingAndGlyphs" >Имя</text>
<text x="242.4" y="292.7" font-size="12.57" fill="#ffffff" font-weight="bold" textLength="31.6" lengthAdjust="spacingAndGlyphs" >Дата</text>
<text x="343.7" y="274.2" font-size="12.57" fill="#ffffff" font-weight="bold" textLength="169.7" lengthAdjust="spacingAndGlyphs" >Сумма заработной платы,</text>
<text x="415.0" y="292.7" font-size="12.57" fill="#ffffff" font-weight="bold" textLength="28.1" lengthAdjust="spacingAndGlyphs" >руб.</text>
<text x="527.2" y="274.1" font-size="12.57" fill="#ffffff" font-weight="bold" textLength="55.8" lengthAdjust="spacingAndGlyphs" >Премия,</text>
<text x="543.1" y="292.8" font-size="12.57" fill="#ffffff" font-weight="bold" textLength="23.9" lengthAdjust="spacingAndGlyphs" >руб</text>
<text x="68.1" y="314.4" font-size="12.57" fill="#000" textLength="95.2" lengthAdjust="spacingAndGlyphs" >Николаев А. Д.</text>
<text x="225.7" y="314.4" font-size="12.57" fill="#000" textLength="64.8" lengthAdjust="spacingAndGlyphs" >25.05.2016</text>
<text x="401.9" y="314.4" font-size="12.57" fill="#000" textLength="53.7" lengthAdjust="spacingAndGlyphs" >21556,00</text>
<text x="534.7" y="314.4" font-size="12.57" fill="#000" textLength="39.9" lengthAdjust="spacingAndGlyphs" >215,56</text>
<text x="68.1" y="334.4" font-size="12.57" fill="#000" textLength="104.7" lengthAdjust="spacingAndGlyphs" >Сафронова В. М.</text>
<text x="225.7" y="334.4" font-size="12.57" fill="#000" textLength="64.8" lengthAdjust="spacingAndGlyphs" >25.05.2016</text>
<text x="401.9" y="334.4" font-size="12.57" fill="#000" textLength="53.7" lengthAdjust="spacingAndGlyphs" >18546,00</text>
<text x="534.7" y="334.4" font-size="12.57" fill="#000" textLength="39.9" lengthAdjust="spacingAndGlyphs" >185,46</text>
<text x="68.1" y="354.4" font-size="12.57" fill="#000" textLength="77.3" lengthAdjust="spacingAndGlyphs" >Коваль Л. П.</text>
<text x="225.7" y="354.4" font-size="12.57" fill="#000" textLength="64.8" lengthAdjust="spacingAndGlyphs" >25.05.2016</text>
<text x="401.9" y="354.4" font-size="12.57" fill="#000" textLength="53.7" lengthAdjust="spacingAndGlyphs" >10546,00</text>
<text x="534.7" y="354.4" font-size="12.57" fill="#000" textLength="39.9" lengthAdjust="spacingAndGlyphs" >105,46</text>
<text x="68.1" y="374.4" font-size="12.57" fill="#000" textLength="98.2" lengthAdjust="spacingAndGlyphs" >Парфенов Д. Ф.</text>
<text x="225.7" y="374.4" font-size="12.57" fill="#000" textLength="64.8" lengthAdjust="spacingAndGlyphs" >25.05.2016</text>
<text x="401.9" y="374.4" font-size="12.57" fill="#000" textLength="53.7" lengthAdjust="spacingAndGlyphs" >35254,00</text>
<text x="534.7" y="374.4" font-size="12.57" fill="#000" textLength="39.9" lengthAdjust="spacingAndGlyphs" >352,54</text>
<text x="68.1" y="394.4" font-size="12.57" fill="#000" textLength="79.0" lengthAdjust="spacingAndGlyphs" >Петров Ф. Л.</text>
<text x="225.7" y="394.4" font-size="12.57" fill="#000" textLength="64.8" lengthAdjust="spacingAndGlyphs" >25.05.2016</text>
<text x="401.9" y="394.4" font-size="12.57" fill="#000" textLength="53.7" lengthAdjust="spacingAndGlyphs" >11456,00</text>
<text x="534.7" y="394.4" font-size="12.57" fill="#000" textLength="39.9" lengthAdjust="spacingAndGlyphs" >114,56</text>
<text x="68.1" y="414.4" font-size="12.57" fill="#000" textLength="82.8" lengthAdjust="spacingAndGlyphs" >Попова М. Д.</text>
<text x="225.7" y="414.4" font-size="12.57" fill="#000" textLength="64.8" lengthAdjust="spacingAndGlyphs" >25.05.2016</text>
<text x="405.3" y="414.4" font-size="12.57" fill="#000" textLength="46.8" lengthAdjust="spacingAndGlyphs" >9564,00</text>
<text x="537.9" y="414.4" font-size="12.57" fill="#000" textLength="33.4" lengthAdjust="spacingAndGlyphs" >95,64</text>
<text x="68.2" y="434.2" font-size="12.57" fill="#000" font-weight="bold" textLength="37.3" lengthAdjust="spacingAndGlyphs" >Итого</text>
<text x="407.0" y="434.2" font-size="12.57" fill="#000" font-weight="bold" textLength="42.8" lengthAdjust="spacingAndGlyphs" >106922</text>
<text x="531.7" y="434.2" font-size="12.57" fill="#000" font-weight="bold" textLength="47.1" lengthAdjust="spacingAndGlyphs" >1069,22</text>
<text x="592.8" y="354.4" font-size="12.57" fill="#000" textLength="73.4" lengthAdjust="spacingAndGlyphs" >не получил</text>
<clipPath id="cG"><rect x="729" y="199" width="81" height="369"/></clipPath>
<g clip-path="url(#cG)">
<text x="731.8" y="254.0" font-size="12.57" fill="#000" textLength="87.9" lengthAdjust="spacingAndGlyphs" >Коэффициент</text>
<text x="796.8" y="293.5" font-size="12.57" fill="#000" textLength="25.4" lengthAdjust="spacingAndGlyphs" >0,00</text>
</g>
<g filter="url(#fSh)" opacity="0.45"><rect x="518.5" y="261" width="76" height="44" rx="9" fill="none" stroke="#000" stroke-width="5"/><rect x="65" y="421.5" width="118" height="20.5" rx="10" fill="none" stroke="#000" stroke-width="5"/><circle cx="596.6" cy="267" r="12.5" fill="#000"/><circle cx="145" cy="445" r="12.5" fill="#000"/></g>
<g clip-path="url(#cIn1)"><g filter="url(#fSh)" opacity="0.55"><rect x="520.5" y="261.5" width="76" height="44" rx="9" fill="none" stroke="#000" stroke-width="5"/></g></g>
<g clip-path="url(#cIn2)"><g filter="url(#fSh)" opacity="0.5"><rect x="66" y="421.5" width="118" height="20.5" rx="10" fill="none" stroke="#000" stroke-width="5"/></g></g>
<rect x="517.5" y="258" width="76" height="44" rx="9" fill="none" stroke="#ff0000" stroke-width="5.2"/>
<rect x="64" y="418.8" width="117.8" height="20.3" rx="10" fill="none" stroke="#ff0000" stroke-width="5.2"/>
<circle cx="595.8" cy="264.4" r="13" fill="url(#gBadge)"/>
<text x="596" y="269.5" font-family="Liberation Serif" font-size="14.5" font-weight="bold" fill="#fff" stroke="#5a4a48" stroke-width="0.7" paint-order="stroke" text-anchor="middle">1</text>
<circle cx="144.2" cy="442" r="12.6" fill="url(#gBadge)"/>
<text x="143.8" y="447.2" font-family="Liberation Sans" font-size="13.5" font-weight="bold" fill="#fff" stroke="#5a4a48" stroke-width="0.7" paint-order="stroke" text-anchor="middle">2</text>
<rect x="810" y="199" width="16" height="369" fill="#e3e6ea" />
<rect x="811.5" y="200.5" width="13" height="6" fill="#fff" stroke="#8b96a4"/>
<line x1="814" y1="202.5" x2="822" y2="202.5" stroke="#8b96a4" stroke-width="1" />
<path d="M813.5,216 L822.5,216 L818,211.5 Z" fill="#4a4a4a"/>
<rect x="810.5" y="224.5" width="14" height="276" rx="1.5" fill="url(#gThumbV)" stroke="#9aa4b0"/>
<line x1="814" y1="360.5" x2="821" y2="360.5" stroke="#7d8794" stroke-width="1" />
<line x1="814" y1="362.5" x2="821" y2="362.5" stroke="#7d8794" stroke-width="1" />
<line x1="814" y1="364.5" x2="821" y2="364.5" stroke="#7d8794" stroke-width="1" />
<line x1="814" y1="366.5" x2="821" y2="366.5" stroke="#7d8794" stroke-width="1" />
<path d="M813.5,557 L822.5,557 L818,561.5 Z" fill="#4a4a4a"/>
<rect x="40" y="568" width="786" height="16" fill="#e1e5ea" />
<rect x="103" y="569" width="400" height="14" fill="url(#gTabBar)" />
<line x1="40" y1="568.5" x2="826" y2="568.5" stroke="#a3abb6" stroke-width="1" />
<line x1="40" y1="583.5" x2="826" y2="583.5" stroke="#8f98a4" stroke-width="1" />
<path d="M47.5,572 L47.5,579 M52.3,572 L48.5,575.5 L52.3,579 Z" fill="#3d4552" stroke="#3d4552" stroke-width="1.3"/>
<path d="M66.2,572 L61.8,575.5 L66.2,579 Z" fill="#3d4552"/>
<path d="M75.9,572 L80.3,575.5 L75.9,579 Z" fill="#3d4552"/>
<path d="M89.7,572 L94,575.5 L89.7,579 Z M95.5,572 L95.5,579" fill="#3d4552" stroke="#3d4552" stroke-width="1.3"/>
<line x1="102.5" y1="569" x2="102.5" y2="583" stroke="#a9b1bb" stroke-width="1" />
<line x1="103.5" y1="569" x2="103.5" y2="583" stroke="#ffffff" stroke-width="1" />
<path d="M111.3,583 L122.8,569" stroke="#9aa2ad" stroke-width="1"/>
<path d="M111.8,583 L123.3,569" stroke="#ffffff" stroke-width="0.6" opacity="0.7"/>
<path d="M113.3,583 L116.3,580 L117.3,583 Z" fill="#f4f6f8" stroke="#aab2bc" stroke-width="0.6"/>
<path d="M162.2,583 L173.7,569" stroke="#9aa2ad" stroke-width="1"/>
<path d="M162.7,583 L174.2,569" stroke="#ffffff" stroke-width="0.6" opacity="0.7"/>
<path d="M164.2,583 L167.2,580 L168.2,583 Z" fill="#f4f6f8" stroke="#aab2bc" stroke-width="0.6"/>
<path d="M216.4,583 L227.9,569" stroke="#9aa2ad" stroke-width="1"/>
<path d="M216.9,583 L228.4,569" stroke="#ffffff" stroke-width="0.6" opacity="0.7"/>
<path d="M218.4,583 L221.4,580 L222.4,583 Z" fill="#f4f6f8" stroke="#aab2bc" stroke-width="0.6"/>
<path d="M278.6,583 L290.1,569" stroke="#9aa2ad" stroke-width="1"/>
<path d="M279.1,583 L290.6,569" stroke="#ffffff" stroke-width="0.6" opacity="0.7"/>
<path d="M280.6,583 L283.6,580 L284.6,583 Z" fill="#f4f6f8" stroke="#aab2bc" stroke-width="0.6"/>
<path d="M339.2,583 L350.7,569" stroke="#9aa2ad" stroke-width="1"/>
<path d="M339.7,583 L351.2,569" stroke="#ffffff" stroke-width="0.6" opacity="0.7"/>
<path d="M341.2,583 L344.2,580 L345.2,583 Z" fill="#f4f6f8" stroke="#aab2bc" stroke-width="0.6"/>
<text x="122.0" y="580.8" font-size="12.01" fill="#3a3a46" textLength="35.8" lengthAdjust="spacingAndGlyphs" >Лист8</text>
<text x="175.2" y="580.8" font-size="12.01" fill="#3a3a46" textLength="35.8" lengthAdjust="spacingAndGlyphs" >Лист9</text>
<text x="229.3" y="580.8" font-size="12.01" fill="#3a3a46" textLength="42.2" lengthAdjust="spacingAndGlyphs" >Лист10</text>
<text x="289.5" y="580.8" font-size="12.01" fill="#3a3a46" textLength="42.3" lengthAdjust="spacingAndGlyphs" >Лист11</text>
<text x="354.4" y="580.8" font-size="12.01" fill="#3a3a46" textLength="69.2" lengthAdjust="spacingAndGlyphs" >Диаграмма1</text>
<rect x="435" y="569" width="50" height="14.5" fill="url(#gActTab)"/>
<line x1="434.5" y1="569" x2="434.5" y2="583" stroke="#9aa2ad" stroke-width="1" />
<text x="443.7" y="580.8" font-size="12.01" fill="#222" font-weight="bold" textLength="37.1" lengthAdjust="spacingAndGlyphs" >Лист1</text>
<path d="M484,583 L497,569" stroke="#9aa2ad" stroke-width="1"/>
<path d="M486,583 L489,580 L490,583 Z" fill="#f4f6f8" stroke="#aab2bc" stroke-width="0.6"/>
<clipPath id="cTabL"><rect x="490" y="569" width="12" height="14"/></clipPath>
<g clip-path="url(#cTabL)">
<text x="496.5" y="580.8" font-size="12.01" fill="#3a3a46" textLength="10.7" lengthAdjust="spacingAndGlyphs" >Л</text>
</g>
<rect x="502.5" y="569.5" width="6.5" height="13" fill="#fff" stroke="#8a94a0"/>
<line x1="505.8" y1="572" x2="505.8" y2="580" stroke="#555" stroke-width="1" />
<rect x="509.5" y="569" width="300.5" height="14" fill="#dde1e6" />
<path d="M520,572 L515.6,575.5 L520,579 Z" fill="#3d4552"/>
<rect x="527.5" y="569.5" width="224" height="13" rx="2" fill="url(#gHThumb)" stroke="#98a1ad"/>
<line x1="636.5" y1="572" x2="636.5" y2="580" stroke="#6d7684" stroke-width="1" />
<line x1="638.5" y1="572" x2="638.5" y2="580" stroke="#6d7684" stroke-width="1" />
<line x1="640.5" y1="572" x2="640.5" y2="580" stroke="#6d7684" stroke-width="1" />
<line x1="642.5" y1="572" x2="642.5" y2="580" stroke="#6d7684" stroke-width="1" />
<path d="M791,572 L795.4,575.5 L791,579 Z" fill="#3d4552"/>
<rect x="802.5" y="569.5" width="7" height="13" fill="#fff" stroke="#8a94a0"/>
<line x1="806" y1="572" x2="806" y2="580" stroke="#555" stroke-width="1" />
<rect x="810" y="568" width="16" height="15" fill="#dde1e6" />
<rect x="40" y="584" width="786" height="22" fill="url(#gStat)" />
<line x1="40" y1="584.5" x2="826" y2="584.5" stroke="#ffffff" stroke-width="1" />
<line x1="40" y1="605.5" x2="826" y2="605.5" stroke="#8a939e" stroke-width="1" />
<text x="48.0" y="598.8" font-size="11.59" fill="#3a3a3a" textLength="37.8" lengthAdjust="spacingAndGlyphs" >Готово</text>
<line x1="94.5" y1="586" x2="94.5" y2="604" stroke="#b6bdc6" stroke-width="1" />
<line x1="128.5" y1="586" x2="128.5" y2="604" stroke="#b6bdc6" stroke-width="1" />
<rect x="104.5" y="589.5" width="14" height="11" fill="#f6f8fb" stroke="#3e6fb8"/>
<rect x="105" y="590" width="13" height="3" fill="#3e6fb8" />
<line x1="107" y1="595.5" x2="116" y2="595.5" stroke="#6b8cc4" stroke-width="1" />
<line x1="107" y1="597.5" x2="116" y2="597.5" stroke="#6b8cc4" stroke-width="1" />
<line x1="107" y1="599.5" x2="116" y2="599.5" stroke="#6b8cc4" stroke-width="1" />
<circle cx="107" cy="589" r="3" fill="#e2452a"/>
<text x="253.9" y="598.8" font-size="11.59" fill="#3a3a3a" textLength="103.2" lengthAdjust="spacingAndGlyphs" >Среднее: 23553,622</text>
<text x="371.7" y="598.8" font-size="11.59" fill="#3a3a3a" textLength="80.3" lengthAdjust="spacingAndGlyphs" >Количество: 31</text>
<text x="468.0" y="598.8" font-size="11.59" fill="#3a3a3a" textLength="91.3" lengthAdjust="spacingAndGlyphs" >Сумма: 471072,44</text>
<line x1="569.5" y1="585" x2="569.5" y2="605" stroke="#8f98a3" stroke-width="1" />
<rect x="574.5" y="586.5" width="18" height="18" rx="3" fill="url(#gNorm)" stroke="#e3ac3a"/>
<rect x="577" y="590" width="13" height="10" fill="#555c66" />
<rect x="578" y="591" width="3" height="2" fill="#ffffff" />
<rect x="578" y="594" width="3" height="2" fill="#ffffff" />
<rect x="578" y="597" width="3" height="2" fill="#ffffff" />
<rect x="582" y="591" width="3" height="2" fill="#ffffff" />
<rect x="582" y="594" width="3" height="2" fill="#ffffff" />
<rect x="582" y="597" width="3" height="2" fill="#ffffff" />
<rect x="586" y="591" width="3" height="2" fill="#ffffff" />
<rect x="586" y="594" width="3" height="2" fill="#ffffff" />
<rect x="586" y="597" width="3" height="2" fill="#ffffff" />
<rect x="595.5" y="589.5" width="13.5" height="11.5" fill="#c9ced5" stroke="#5a616b"/>
<rect x="598.5" y="591.5" width="7" height="7" fill="#f8f9fb" stroke="#6a717b"/>
<line x1="600" y1="594" x2="604" y2="594" stroke="#9aa1aa" stroke-width="0.8" />
<line x1="600" y1="596" x2="604" y2="596" stroke="#9aa1aa" stroke-width="0.8" />
<rect x="614.5" y="589.5" width="13.5" height="11.5" fill="#c9ced5" stroke="#5a616b"/>
<rect x="615" y="590" width="3.5" height="6.5" fill="#ffffff" />
<rect x="619.5" y="590" width="3.5" height="6.5" fill="#ffffff" />
<line x1="618.8" y1="590" x2="618.8" y2="597" stroke="#5a616b" stroke-width="0.8" />
<line x1="623.3" y1="590" x2="623.3" y2="597" stroke="#5a616b" stroke-width="0.8" />
<line x1="615" y1="597.3" x2="623.5" y2="597.3" stroke="#5a616b" stroke-width="0.8" />
<text x="639.7" y="598.8" font-size="11.59" fill="#3a3a3a" textLength="28.0" lengthAdjust="spacingAndGlyphs" >100%</text>
<circle cx="682.8" cy="595.2" r="7" fill="url(#gZoomBtn)" stroke="#6c7480"/>
<line x1="679" y1="595.5" x2="686.5" y2="595.5" stroke="#333" stroke-width="2" />
<line x1="690" y1="595.5" x2="791" y2="595.5" stroke="#9aa2ad" stroke-width="1" />
<line x1="690" y1="596.5" x2="791" y2="596.5" stroke="#ffffff" stroke-width="1" />
<path d="M737.5,589.5 L744.5,589.5 L744.5,597 L741,600.5 L737.5,597 Z" fill="#f5f6f8" stroke="#6c7480"/>
<circle cx="798.9" cy="595.2" r="7" fill="url(#gZoomBtn)" stroke="#6c7480"/>
<line x1="795" y1="595.5" x2="802.8" y2="595.5" stroke="#333" stroke-width="2" />
<line x1="798.9" y1="591.6" x2="798.9" y2="599.4" stroke="#333" stroke-width="2" />
<rect x="823" y="600" width="2" height="2" fill="#9aa2ad" />
<rect x="823" y="603" width="2" height="2" fill="#9aa2ad" />
<rect x="820" y="603" width="2" height="2" fill="#9aa2ad" />
<rect x="817" y="603" width="2" height="2" fill="#9aa2ad" />
<rect x="820" y="600" width="2" height="2" fill="#9aa2ad" />
<rect x="823" y="597" width="2" height="2" fill="#9aa2ad" /></svg></body></html>
